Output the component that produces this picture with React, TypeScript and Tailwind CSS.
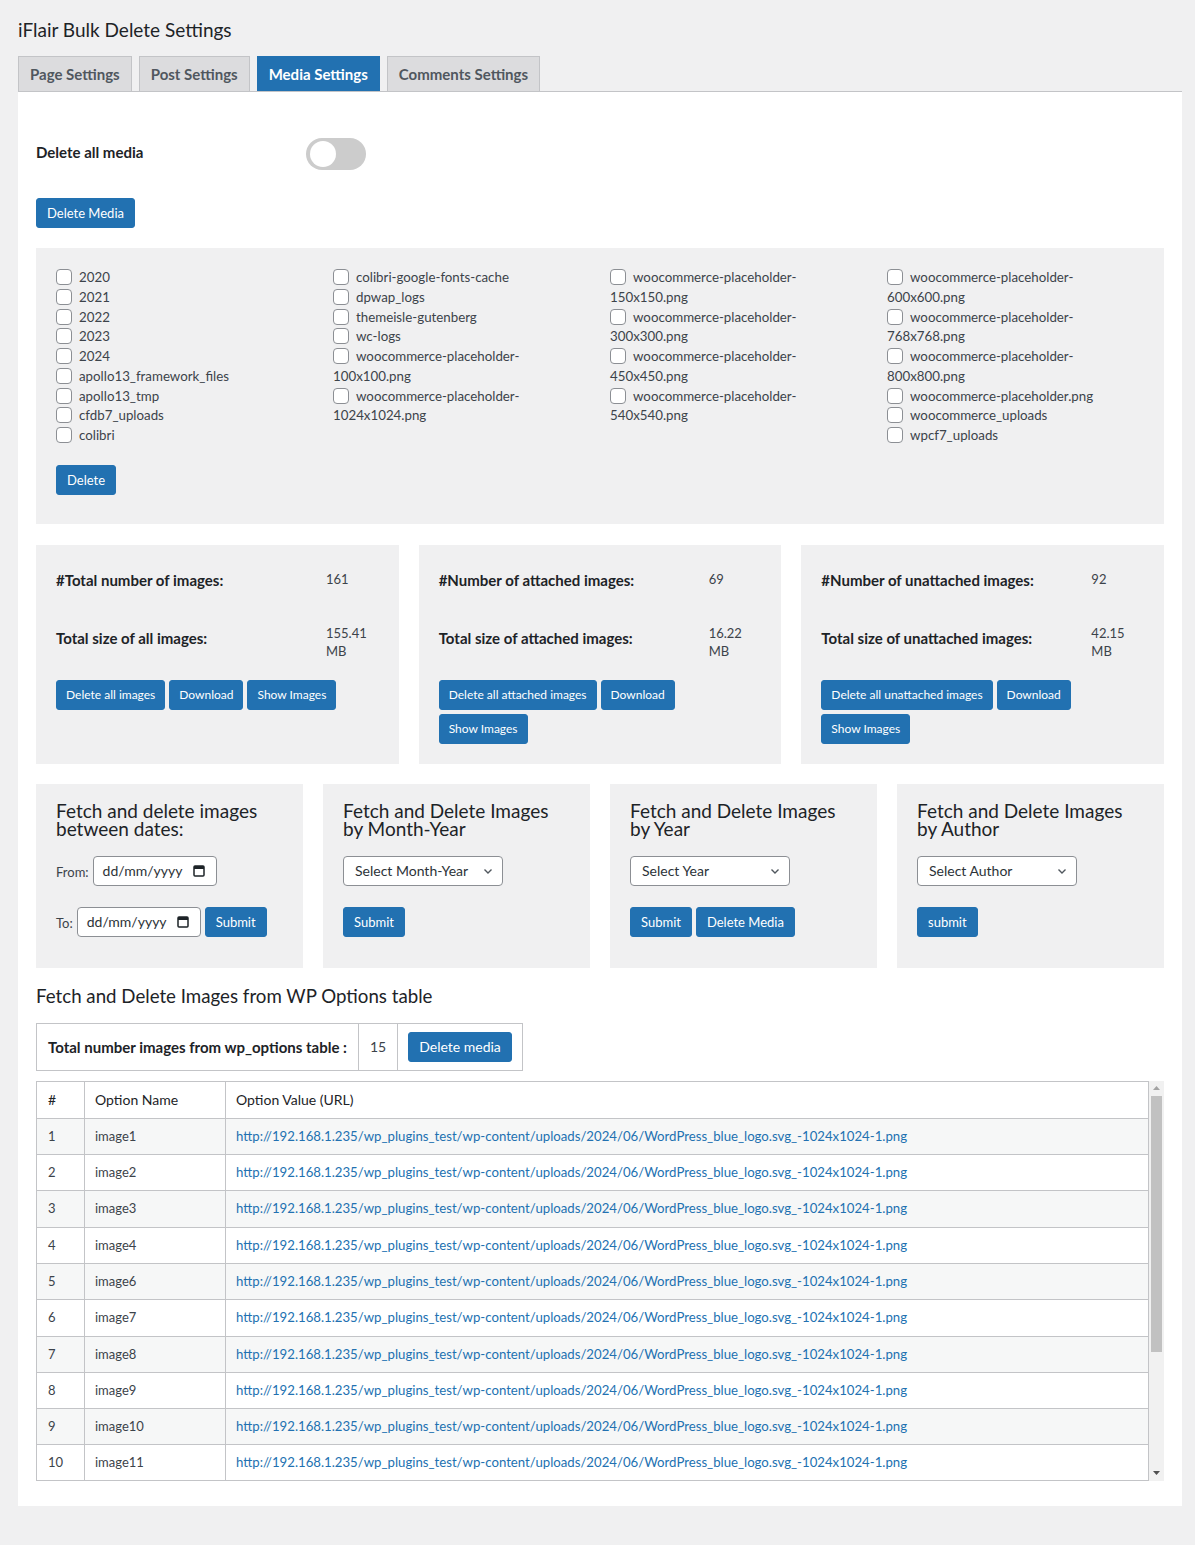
import React from 'react';

const URL = 'http://192.168.1.235/wp_plugins_test/wp-content/uploads/2024/06/WordPress_blue_logo.svg_-1024x1024-1.png';

type Item = [string, string?];

const columns: Item[][] = [
  [['2020'], ['2021'], ['2022'], ['2023'], ['2024'], ['apollo13_framework_files'], ['apollo13_tmp'], ['cfdb7_uploads'], ['colibri']],
  [
    ['colibri-google-fonts-cache'],
    ['dpwap_logs'],
    ['themeisle-gutenberg'],
    ['wc-logs'],
    ['woocommerce-placeholder-', '100x100.png'],
    ['woocommerce-placeholder-', '1024x1024.png']
  ],
  [
    ['woocommerce-placeholder-', '150x150.png'],
    ['woocommerce-placeholder-', '300x300.png'],
    ['woocommerce-placeholder-', '450x450.png'],
    ['woocommerce-placeholder-', '540x540.png']
  ],
  [
    ['woocommerce-placeholder-', '600x600.png'],
    ['woocommerce-placeholder-', '768x768.png'],
    ['woocommerce-placeholder-', '800x800.png'],
    ['woocommerce-placeholder.png'],
    ['woocommerce_uploads'],
    ['wpcf7_uploads']
  ]
];

const rows = [
  'image1', 'image2', 'image3', 'image4', 'image6', 'image7', 'image8', 'image9', 'image10', 'image11',
  'image12', 'image13', 'image14', 'image15', 'image16'
];

const Btn = ({ children, className = 'text-[13px] px-[10px]' }: { children: React.ReactNode; className?: string }) => (
  <button
    className={`h-[30px] rounded-[3px] bg-[#2271b1] border border-[#2271b1] text-white leading-[28px] whitespace-nowrap ${className}`}
  >
    {children}
  </button>
);

const Chevron = () => (
  <svg width="12" height="12" viewBox="0 0 12 12" fill="none" stroke="#50575e" strokeWidth="1.4">
    <polyline points="2.5,4.5 6,8 9.5,4.5" />
  </svg>
);

const Calendar = () => (
  <svg width="12" height="13" viewBox="0 0 12 13" fill="none">
    <rect x="1" y="2" width="10" height="10" rx="1" stroke="#1d2327" strokeWidth="1.5" />
    <rect x="1" y="2" width="10" height="3" fill="#1d2327" />
  </svg>
);

const DateBox = () => (
  <div className="w-[124px] h-[30px] bg-white border border-[#8c8f94] rounded-[4px] flex items-center justify-between pl-[9px] pr-[11px] text-[14px] text-[#2c3338]">
    <span>dd/mm/yyyy</span>
    <Calendar />
  </div>
);

const SelectBox = ({ label }: { label: string }) => (
  <div className="w-[160px] h-[30px] bg-white border border-[#8c8f94] rounded-[4px] flex items-center justify-between pl-[11px] pr-[8px] text-[14px] text-[#2c3338]">
    <span>{label}</span>
    <Chevron />
  </div>
);

const Check = () => (
  <span className="inline-block align-middle w-[16px] h-[16px] bg-white border border-[#8c8f94] rounded-[4px] mr-[7px] -mt-[3px]" />
);

const StatBox = ({
  count,
  countLabel,
  size,
  sizeLabel,
  first,
  wrap
}: {
  count: string;
  countLabel: string;
  size: string;
  sizeLabel: string;
  first: string;
  wrap: boolean;
}) => {
  const small = 'text-[12px] px-[9px]';
  return (
    <div className="flex-1 bg-[#f0f0f1] p-[20px]">
      <div className="grid grid-cols-[270px_1fr] items-center h-[30px]">
        <span className="font-bold text-[15px] text-[#1d2327]">{countLabel}</span>
        <span className="text-[13px]">{count}</span>
      </div>
      <div className="grid grid-cols-[270px_1fr] items-center mt-[29px]">
        <span className="font-bold text-[15px] text-[#1d2327] -mt-[8px]">{sizeLabel}</span>
        <span className="text-[13px] leading-[18px]">
          {size}
          <br />
          MB
        </span>
      </div>
      <div className="flex gap-[4px] mt-[20px]">
        <Btn className={small}>{first}</Btn>
        <Btn className={small}>Download</Btn>
        {!wrap && <Btn className={small}>Show Images</Btn>}
      </div>
      {wrap && (
        <div className="mt-[4px]">
          <Btn className={small}>Show Images</Btn>
        </div>
      )}
    </div>
  );
};

const FetchBox = ({ title, sub, children }: { title: string; sub: string; children: React.ReactNode }) => (
  <div className="flex-1 bg-[#f0f0f1] pt-[18px] px-[20px] pb-[31px]">
    <h3 className="text-[19px] leading-[18px] text-[#1d2327]">
      {title}
      <br />
      {sub}
    </h3>
    {children}
  </div>
);

const ScrollBar = () => (
  <div className="w-[15px] bg-[#f1f1f1] flex flex-col items-center">
    <div className="h-[15px] flex items-center justify-center">
      <svg width="7" height="4" viewBox="0 0 7 4">
        <polygon points="0,4 7,4 3.5,0" fill="#a3a3a3" />
      </svg>
    </div>
    <div className="w-[11px] h-[256px] bg-[#c1c1c1]" />
    <div className="flex-1" />
    <div className="h-[15px] flex items-center justify-center">
      <svg width="7" height="4" viewBox="0 0 7 4">
        <polygon points="0,0 7,0 3.5,4" fill="#505050" />
      </svg>
    </div>
  </div>
);

export default function App() {
  return (
    <div className="min-h-[1545px] bg-[#f0f0f1] font-[Lato] text-[#3c434a]">
      <div className="px-[18px] pt-[17px] pr-[13px]">
        <h1 className="text-[19px] leading-[26px] text-[#1d2327]">iFlair Bulk Delete Settings</h1>

        <div className="flex items-end gap-[7px] mt-[13px] border-b border-[#c3c4c7]">
          {['Page Settings', 'Post Settings', 'Media Settings', 'Comments Settings'].map((t, i) => (
            <div
              key={t}
              className={
                i === 2
                  ? 'h-[35px] px-[11px] flex items-center border border-b-0 border-[#2271b1] bg-[#2271b1] text-white text-[15px] font-bold'
                  : 'h-[35px] px-[11px] flex items-center border border-b-0 border-[#c3c4c7] bg-[#dcdcde] text-[#50575e] text-[15px] font-bold'
              }
            >
              {t}
            </div>
          ))}
        </div>

        <div className="bg-white px-[18px] pt-[46px] pb-[25px]">
          <div className="flex items-center h-[32px]">
            <span className="w-[270px] font-bold text-[15px] text-[#1d2327] -mt-[3px]">Delete all media</span>
            <div className="relative w-[60px] h-[32px] rounded-full bg-[#cccccc]">
              <div className="absolute left-[4px] top-[3px] w-[26px] h-[26px] rounded-full bg-white" />
            </div>
          </div>

          <Btn className="text-[13px] px-[10px] mt-[28px]">Delete Media</Btn>

          <div className="mt-[20px] bg-[#f0f0f1] pt-[20px] pl-[20px] pb-[29px]">
            <div className="grid grid-cols-[277px_277px_277px_277px] text-[13.3px] leading-[19.75px]">
              {columns.map((col, ci) => (
                <div key={ci}>
                  {col.map(([a, b], ri) => (
                    <div key={ri}>
                      <Check />
                      {a}
                      {b && (
                        <>
                          <br />
                          {b}
                        </>
                      )}
                    </div>
                  ))}
                </div>
              ))}
            </div>
            <Btn className="text-[13px] px-[10px] mt-[19px]">Delete</Btn>
          </div>

          <div className="flex gap-[20px] mt-[21px]">
            <StatBox countLabel="#Total number of images:" count="161" sizeLabel="Total size of all images:" size="155.41" first="Delete all images" wrap={false} />
            <StatBox countLabel="#Number of attached images:" count="69" sizeLabel="Total size of attached images:" size="16.22" first="Delete all attached images" wrap />
            <StatBox countLabel="#Number of unattached images:" count="92" sizeLabel="Total size of unattached images:" size="42.15" first="Delete all unattached images" wrap />
          </div>

          <div className="flex gap-[20px] mt-[20px]">
            <FetchBox title="Fetch and delete images" sub="between dates:">
              <div className="flex items-center mt-[18px]">
                <span className="text-[13px] mr-[4px] mt-[4px]">From:</span>
                <DateBox />
              </div>
              <div className="flex items-center mt-[21px]">
                <span className="text-[13px] mr-[4px] mt-[4px]">To:</span>
                <DateBox />
                <Btn className="text-[13px] px-[10px] ml-[4px]">Submit</Btn>
              </div>
            </FetchBox>
            <FetchBox title="Fetch and Delete Images" sub="by Month-Year">
              <div className="mt-[18px]">
                <SelectBox label="Select Month-Year" />
              </div>
              <Btn className="text-[13px] px-[10px] mt-[21px]">Submit</Btn>
            </FetchBox>
            <FetchBox title="Fetch and Delete Images" sub="by Year">
              <div className="mt-[18px]">
                <SelectBox label="Select Year" />
              </div>
              <div className="flex gap-[4px] mt-[21px]">
                <Btn>Submit</Btn>
                <Btn>Delete Media</Btn>
              </div>
            </FetchBox>
            <FetchBox title="Fetch and Delete Images" sub="by Author">
              <div className="mt-[18px]">
                <SelectBox label="Select Author" />
              </div>
              <Btn className="text-[13px] px-[10px] mt-[21px]">submit</Btn>
            </FetchBox>
          </div>

          <h2 className="mt-[16px] text-[18.7px] leading-[24px] text-[#1d2327]">Fetch and Delete Images from WP Options table</h2>

          <table className="mt-[15px] border-collapse border border-[#c3c4c7]">
            <tbody>
              <tr className="h-[47px]">
                <td className="border border-[#c3c4c7] px-[11px] font-bold text-[15px] text-[#1d2327]">
                  Total number images from wp_options table :
                </td>
                <td className="border border-[#c3c4c7] px-[11px] text-[14px]">15</td>
                <td className="border border-[#c3c4c7] px-[10px]">
                  <Btn className="text-[14px] px-[10px]">Delete media</Btn>
                </td>
              </tr>
            </tbody>
          </table>

          <div className="mt-[10px] h-[400px] flex">
            <div className="flex-1 overflow-hidden border-b border-[#c3c4c7]">
              <table className="w-full border-collapse table-fixed">
                <colgroup>
                  <col className="w-[48px]" />
                  <col className="w-[141px]" />
                  <col />
                </colgroup>
                <thead>
                  <tr className="text-[14px] text-[#1d2327]">
                    <th className="border border-[#c3c4c7] px-[11px] py-[8px] leading-[20px] text-left font-normal">#</th>
                    <th className="border border-[#c3c4c7] px-[10px] py-[8px] leading-[20px] text-left font-normal">Option Name</th>
                    <th className="border border-[#c3c4c7] px-[10px] py-[8px] leading-[20px] text-left font-normal">Option Value (URL)</th>
                  </tr>
                </thead>
                <tbody>
                  {rows.map((name, i) => (
                    <tr key={name} className={i % 2 === 0 ? 'bg-[#f6f7f7] text-[13px]' : 'bg-white text-[13px]'}>
                      <td className="border border-[#c3c4c7] px-[11px] py-[8px] leading-[19.3px]">{i + 1}</td>
                      <td className="border border-[#c3c4c7] px-[10px] py-[8px] leading-[19.3px]">{name}</td>
                      <td className="border border-[#c3c4c7] px-[10px] py-[8px] leading-[19.3px]">
                        <a className="text-[#2271b1] text-[13.2px]">{URL}</a>
                      </td>
                    </tr>
                  ))}
                </tbody>
              </table>
            </div>
            <ScrollBar />
          </div>
        </div>
      </div>
    </div>
  );
}
